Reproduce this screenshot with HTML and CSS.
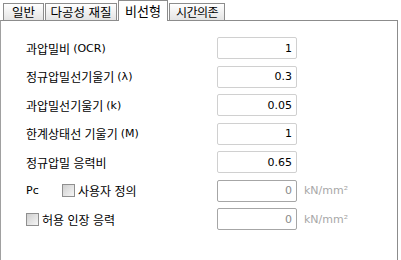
FILE: index.html
```html
<!DOCTYPE html>
<html lang="ko">
  <head>
    <meta charset="UTF-8" />
    <title>비선형</title>
    <link rel="stylesheet" href="styles.css">
  </head>
  <body>
    <!-- 탭 -->
    <div class="tabs">
      <div class="tab tab-general">일반</div>
      <div class="tab tab-porous">다공성 재질</div>
      <div class="tab tab-nonlinear active">비선형</div>
      <div class="tab tab-time">시간의존</div>
    </div>

    <!-- 비선형 속성 -->
    <div class="panel">
      <div class="form">
        <div class="label">과압밀비 <span class="latin">(OCR)</span></div>
        <input class="field" type="text" value="1" />
        <div></div>

        <div class="label">정규압밀선기울기 <span class="latin">(λ)</span></div>
        <input class="field" type="text" value="0.3" />
        <div></div>

        <div class="label">과압밀선기울기 <span class="latin">(k)</span></div>
        <input class="field" type="text" value="0.05" />
        <div></div>

        <div class="label">한계상태선 기울기 <span class="latin">(M)</span></div>
        <input class="field" type="text" value="1" />
        <div></div>

        <div class="label">정규압밀 응력비</div>
        <input class="field" type="text" value="0.65" />
        <div></div>

        <div class="label">
          <span class="latin pc">Pc</span>
          <label class="check"><span class="box"></span>사용자 정의</label>
        </div>
        <input class="field" type="text" value="0" disabled />
        <div class="unit">kN/mm²</div>

        <div class="label">
          <label class="check"><span class="box"></span>허용 인장 응력</label>
        </div>
        <input class="field" type="text" value="0" disabled />
        <div class="unit">kN/mm²</div>
      </div>
    </div>
  </body>
</html>
```

FILE: styles.css
```css
body {
  margin: 0;
  width: 401px;
  height: 260px;
  overflow: hidden;
  background-color: #fff;
  font-family: "Noto Sans CJK KR", "Liberation Sans", sans-serif;
  font-size: 12px;
  color: #000;
}

.tabs {
  display: flex;
  align-items: flex-end;
  gap: 1px;
  height: 20px;
  padding-left: 3px;
}
.tab {
  box-sizing: border-box;
  height: 17px;
  line-height: 15px;
  border: 1px solid #8c8c8c;
  border-bottom: none;
  background: linear-gradient(#ffffff, #e4e4e4);
  font-size: 12.5px;
  text-align: center;
  white-space: nowrap;
}
.tab-general { width: 41px; }
.tab-porous { width: 72px; }
.tab-nonlinear { width: 50px; }
.tab-time { width: 56px; font-size: 12px; letter-spacing: -0.5px; }
.tab.active {
  position: relative;
  z-index: 1;
  height: 21px;
  line-height: 19px;
  margin-bottom: -1px;
  background: #fff;
  font-size: 13px;
}

.panel {
  width: 396px;
  height: 260px;
  border: 1px solid #8c8c8c;
  border-left-color: #a0a0a0;
}

.form {
  display: grid;
  grid-template-columns: 184px 80px auto;
  grid-auto-rows: 22px;
  row-gap: 6.5px;
  column-gap: 7px;
  align-items: center;
  padding: 16px 0 0 25px;
}

.label {
  display: flex;
  align-items: center;
  white-space: nowrap;
}
.latin {
  font-family: "DejaVu Sans", sans-serif;
  font-size: 11px;
  margin-left: 3px;
}
.pc {
  margin-left: 0;
  width: 36px;
}

.check {
  display: flex;
  align-items: center;
  gap: 3px;
}
.box {
  width: 11px;
  height: 11px;
  border: 1px solid #8f8f8f;
  background: linear-gradient(135deg, #cfcfcf, #f6f6f6);
}

.field {
  box-sizing: border-box;
  width: 80px;
  height: 22px;
  margin: 0;
  padding: 0 4px 0 0;
  border: 1px solid #d0d0d0;
  border-radius: 2px;
  background: #fff;
  font-family: "DejaVu Sans", sans-serif;
  font-size: 11px;
  color: #000;
  text-align: right;
  outline: none;
}
.field:disabled {
  border-color: #a6a6a6;
  color: #8a8a8a;
}

.unit {
  font-family: "DejaVu Sans", sans-serif;
  font-size: 11px;
  color: #a8a8a8;
}
```
